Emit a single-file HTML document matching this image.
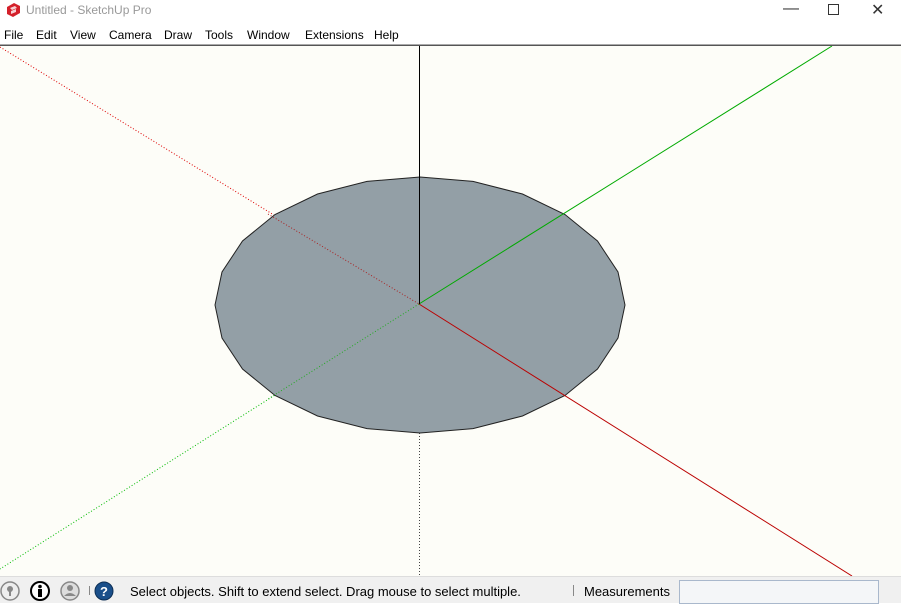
<html><head><style>
body{margin:0;width:901px;height:602px;overflow:hidden;background:#fff;font-family:"Liberation Sans",sans-serif;position:relative}
.t{position:absolute;font-size:12px;color:#000;white-space:nowrap}
</style></head><body>
<div style="position:absolute;left:0;top:0;width:901px;height:22px;background:#fff"></div>
<svg style="position:absolute;left:5px;top:2px" width="16" height="16" viewBox="0 0 16 16"><path d="M2 5 L9 1 L15 4 L15 11 L8 15 L2 12Z" fill="#d4202a"/><path d="M5 6 L10 4 L12 6 L7 8Z M6 9 L11 7 L11 10 L6 12Z" fill="#fff" opacity=".8"/></svg>
<div class="t" style="left:26px;top:3px;color:#999">Untitled - SketchUp Pro</div>
<div class="t" style="left:783px;top:0px;font-size:16px;color:#333">—</div>
<div style="position:absolute;left:828px;top:4px;width:9px;height:9px;border:1px solid #333"></div>
<div class="t" style="left:871px;top:0px;font-size:16px;color:#333">✕</div>
<div class="t" style="left:4px;top:28px">File</div>
<div class="t" style="left:36px;top:28px">Edit</div>
<div class="t" style="left:70px;top:28px">View</div>
<div class="t" style="left:109px;top:28px">Camera</div>
<div class="t" style="left:164px;top:28px">Draw</div>
<div class="t" style="left:205px;top:28px">Tools</div>
<div class="t" style="left:247px;top:28px">Window</div>
<div class="t" style="left:305px;top:28px">Extensions</div>
<div class="t" style="left:374px;top:28px">Help</div>
<div style="position:absolute;left:0;top:44px;width:901px;height:1px;background:#aaa"></div>
<div style="position:absolute;left:0;top:45px;width:901px;height:1px;background:#555"></div>
<svg style="position:absolute;left:0;top:46px" width="901" height="530">
<rect width="901" height="530" fill="#fdfdf8"/>
<line x1="0" y1="1" x2="419" y2="258" stroke="#d00" stroke-dasharray="1,2"/>
<line x1="419" y1="258" x2="0" y2="523" stroke="#0b0" stroke-dasharray="1,2"/>
<line x1="419.5" y1="258" x2="419.5" y2="530" stroke="#444" stroke-dasharray="1,2"/>
<polygon points="625,259 618,292 597.5,323 565,349.5 522.5,370 473,382.6 420,387 367,382.6 317.5,370 275,349.5 242.5,323 222,292 215,259 222,226 242.5,195 275,168.5 317.5,148 367,135.4 420,131 473,135.4 522.5,148 565,168.5 597.5,195 618,226" fill="#939fa6" stroke="#222" stroke-width="1"/>
<line x1="268" y1="168" x2="419" y2="258" stroke="#a22" stroke-dasharray="1,2"/>
<line x1="419" y1="258" x2="268" y2="353" stroke="#2a2" stroke-dasharray="1,2"/>
<line x1="419" y1="258" x2="852" y2="530" stroke="#b00"/>
<line x1="419" y1="258" x2="832" y2="0" stroke="#0a0"/>
<line x1="419.5" y1="0" x2="419.5" y2="258" stroke="#000"/>
</svg>
<div style="position:absolute;left:0;top:576px;width:901px;height:26px;background:#f0f0f0;border-top:1px solid #ddd"></div>
<svg style="position:absolute;left:0;top:580px" width="120" height="22">
<circle cx="10" cy="11" r="9" fill="#eee" stroke="#888" stroke-width="1.5"/><circle cx="10" cy="9" r="3" fill="#888"/><rect x="9" y="10" width="2" height="6" fill="#888"/>
<circle cx="40" cy="11" r="9" fill="#fff" stroke="#000" stroke-width="2"/><circle cx="40" cy="6.5" r="1.8"/><rect x="38" y="9" width="4" height="8"/>
<circle cx="70" cy="11" r="9" fill="#ddd" stroke="#888" stroke-width="1.5"/><circle cx="70" cy="8" r="3" fill="#888"/><path d="M64 16 Q70 10 76 16Z" fill="#888"/>
<rect x="89" y="6" width="1" height="9" fill="#888"/>
<circle cx="104" cy="11" r="9" fill="#1a4f8a" stroke="#0d2f55"/><text x="104" y="16" font-size="13" font-weight="bold" fill="#fff" text-anchor="middle" font-family="Liberation Sans">?</text>
</svg>
<div class="t" style="left:130px;top:584px;font-size:13px">Select objects. Shift to extend select. Drag mouse to select multiple.</div>
<div style="position:absolute;left:573px;top:585px;width:1px;height:11px;background:#888"></div>
<div class="t" style="left:584px;top:584px;font-size:13px">Measurements</div>
<div style="position:absolute;left:679px;top:580px;width:198px;height:22px;background:#f4f6f8;border:1px solid #a9b8cc"></div>
</body></html>
